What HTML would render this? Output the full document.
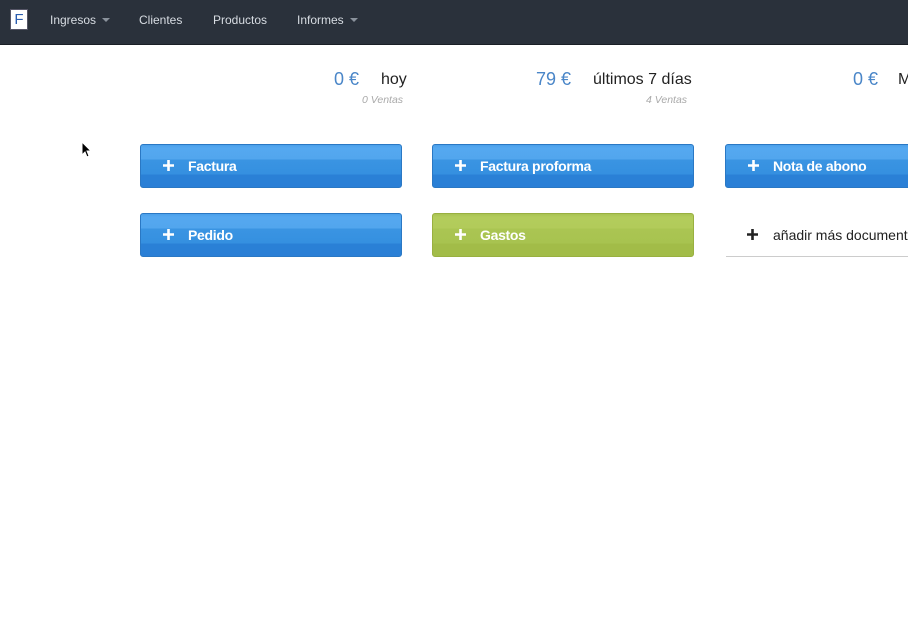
<!DOCTYPE html>
<html><head><style>
body{margin:0;width:908px;height:619px;background:#fff;font-family:"Liberation Sans",sans-serif;position:relative;overflow:hidden}
.nav{position:absolute;left:0;top:0;width:908px;height:44px;background:#2a313b;border-bottom:1px solid #1a1f26}
.nav span{position:absolute;top:13px;color:#d8dde3;font-size:12px}
.caret{display:inline-block;width:0;height:0;border-left:4px solid transparent;border-right:4px solid transparent;border-top:4px solid #8a929c;margin-left:6px;vertical-align:2px}
.logo{position:absolute;left:10px;top:9px;width:16px;height:19px;background:#fff;border:1px solid #556;color:#2a5db0;font-size:15px;line-height:19px;text-align:center}
.amt{position:absolute;top:69px;font-size:18px;color:#4a86c8}
.lbl{position:absolute;top:71px;font-size:16px;color:#222}
.sub{position:absolute;top:94px;font-size:10.5px;font-style:italic;color:#aaa}
.btn{position:absolute;width:262px;height:44px;border-radius:3px;color:#fff;font-size:14px;font-weight:bold;line-height:43px;box-sizing:border-box;padding-left:47px;
background:linear-gradient(#4aa0ea 0,#55a8f0 3px,#52a6ee 14px,#3a94e2 15px,#3590e0 29px,#2a80d6 30px,#2a7fd6 44px);border:1px solid #2a78c4;letter-spacing:-0.3px}
.pl{position:absolute;left:22px;top:15px}
.green{background:linear-gradient(#a8c252 0,#b3cc5c 3px,#b2cb5a 14px,#aac552 15px,#a8c350 29px,#a2bc48 30px,#a2bc48 44px);border-color:#99b040}
</style></head><body>
<div class="nav">
<div class="logo">F</div>
<span style="left:50px">Ingresos<i class="caret"></i></span>
<span style="left:139px">Clientes</span>
<span style="left:213px">Productos</span>
<span style="left:297px">Informes<i class="caret"></i></span>
</div>
<div class="amt" style="left:334px">0 €</div><div class="lbl" style="left:381px">hoy</div><div class="sub" style="left:362px">0 Ventas</div>
<div class="amt" style="left:536px">79 €</div><div class="lbl" style="left:593px">últimos 7 días</div><div class="sub" style="left:646px">4 Ventas</div>
<div class="amt" style="left:853px">0 €</div><div class="lbl" style="left:898px">M</div>
<svg style="position:absolute;left:81px;top:141px" width="12" height="18"><path d="M1 1 L1 14 L4 11 L6 16 L8 15 L6 10 L10 10 Z" fill="#000" stroke="#fff" stroke-width="1"/></svg>
<div class="btn" style="left:140px;top:144px"><svg class="pl" width="11" height="11"><path d="M0 5.5H11M5.5 0V11" stroke="#fff" stroke-width="2.6"/></svg>Factura</div>
<div class="btn" style="left:432px;top:144px"><svg class="pl" width="11" height="11"><path d="M0 5.5H11M5.5 0V11" stroke="#fff" stroke-width="2.6"/></svg>Factura proforma</div>
<div class="btn" style="left:725px;top:144px;width:200px"><svg class="pl" width="11" height="11"><path d="M0 5.5H11M5.5 0V11" stroke="#fff" stroke-width="2.6"/></svg>Nota de abono</div>
<div class="btn" style="left:140px;top:213px"><svg class="pl" width="11" height="11"><path d="M0 5.5H11M5.5 0V11" stroke="#fff" stroke-width="2.6"/></svg>Pedido</div>
<div class="btn green" style="left:432px;top:213px"><svg class="pl" width="11" height="11"><path d="M0 5.5H11M5.5 0V11" stroke="#fff" stroke-width="2.6"/></svg>Gastos</div>
<div style="position:absolute;left:726px;top:213px;width:200px;height:44px;border-bottom:1px solid #ccc;line-height:44px;font-size:14px;color:#222;padding-left:47px;box-sizing:border-box"><svg style="position:absolute;left:21px;top:16px" width="11" height="11"><path d="M0 5.5H11M5.5 0V11" stroke="#222" stroke-width="2.6"/></svg>añadir más documentos</div>
</body></html>
